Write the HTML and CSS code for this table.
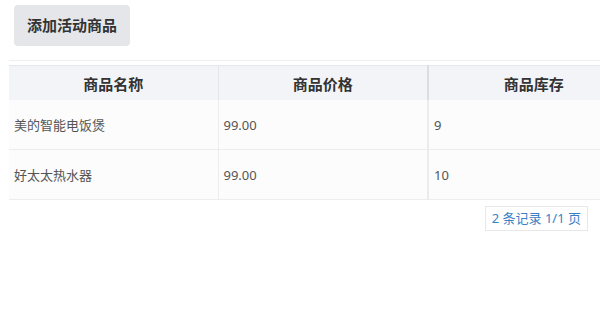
FILE: index.html
```html
<!DOCTYPE html>
<html lang="zh-CN">
<head>
<meta charset="utf-8">
<link rel="stylesheet" href="styles.css">
</head>
<body>
<div class="page">
  <div class="toolbar">
    <button class="btn">添加活动商品</button>
  </div>
  <div class="divider"></div>
  <div class="table-wrap">
    <table class="grid">
      <colgroup>
        <col class="c1"><col class="c2"><col class="c3">
      </colgroup>
      <thead>
        <tr><th>商品名称</th><th>商品价格</th><th class="last">商品库存</th></tr>
      </thead>
      <tbody>
        <tr><td>美的智能电饭煲</td><td>99.00</td><td>9</td></tr>
        <tr><td>好太太热水器</td><td>99.00</td><td>10</td></tr>
      </tbody>
    </table>
  </div>
  <div class="pager-row">
    <div class="pager">2 条记录 1/1 页</div>
  </div>
</div>
</body>
</html>
```
FILE: styles.css
```css
html, body {
  margin: 0;
  padding: 0;
  background: #fff;
}
body {
  font-family: "Noto Sans", "Noto Sans CJK SC", "Liberation Sans", sans-serif;
  color: #555;
  overflow: hidden;
}
.page {
  width: 600px;
  overflow: hidden;
}
.toolbar {
  padding: 5px 0 0 14px;
}
.btn {
  display: block;
  width: 116px;
  height: 41px;
  border: none;
  border-radius: 4px;
  background: #e5e6ea;
  color: #333;
  font-family: inherit;
  font-size: 15px;
  font-weight: bold;
  padding: 0;
  line-height: 41px;
}
.divider {
  margin: 14px 0 0 9px;
  border-top: 1px solid #efefef;
}
.table-wrap {
  margin: 4px 0 0 9px;
  overflow: hidden;
}
.grid {
  border-collapse: collapse;
  width: 630px;
  table-layout: fixed;
}
.c1 { width: 209px; }
.c2 { width: 210px; }
.c3 { width: 211px; }
.grid th {
  height: 34px;
  padding: 0;
  background: #f3f4f8;
  border-top: 1px solid #e6e7ea;
  border-right: 1px solid #e4e5e8;
  color: #333;
  font-size: 15px;
  font-weight: bold;
  text-align: center;
  vertical-align: middle;
}
.grid th:nth-child(2) {
  border-right: 2px solid #dcdde0;
}
.grid td {
  height: 49px;
  padding: 0 0 0 5px;
  background: #fcfcfc;
  border-bottom: 1px solid #ededed;
  border-right: 1px solid #ededed;
  font-size: 13px;
  color: #555;
  vertical-align: middle;
}
.grid td:nth-child(2) {
  border-right: 2px solid #ebebeb;
}
.pager-row {
  display: flex;
  justify-content: flex-end;
  padding-right: 12px;
  margin-top: 6px;
}
.pager {
  height: 23px;
  line-height: 23px;
  padding: 0 6px;
  border: 1px solid #e8e8e8;
  color: #3b80c4;
  font-size: 13px;
}
```
